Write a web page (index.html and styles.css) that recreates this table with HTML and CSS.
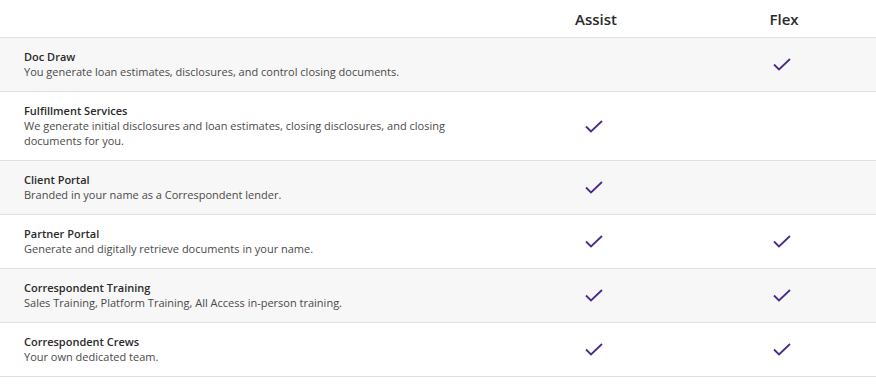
FILE: index.html
```html
<!DOCTYPE html>
<html lang="en">
<head>
  <meta charset="UTF-8">
  <meta name="viewport" content="width=device-width, initial-scale=1">
  <title>Compare Plans</title>
  <link rel="stylesheet" href="styles.css">
</head>
<body>
  <div class="compare">
    <div class="row head">
      <div class="feature"></div>
      <div class="plan">Assist</div>
      <div class="plan">Flex</div>
    </div>

    <div class="row shaded">
      <div class="feature">
        <h3>Doc Draw</h3>
        <p>You generate loan estimates, disclosures, and control closing documents.</p>
      </div>
      <div class="cell"></div>
      <div class="cell"><span class="check"></span></div>
    </div>

    <div class="row">
      <div class="feature">
        <h3>Fulfillment Services</h3>
        <p>We generate initial disclosures and loan estimates, closing disclosures, and closing documents for you.</p>
      </div>
      <div class="cell"><span class="check"></span></div>
      <div class="cell"></div>
    </div>

    <div class="row shaded">
      <div class="feature">
        <h3>Client Portal</h3>
        <p>Branded in your name as a Correspondent lender.</p>
      </div>
      <div class="cell"><span class="check"></span></div>
      <div class="cell"></div>
    </div>

    <div class="row">
      <div class="feature">
        <h3>Partner Portal</h3>
        <p>Generate and digitally retrieve documents in your name.</p>
      </div>
      <div class="cell"><span class="check"></span></div>
      <div class="cell"><span class="check"></span></div>
    </div>

    <div class="row shaded">
      <div class="feature">
        <h3>Correspondent Training</h3>
        <p>Sales Training, Platform Training, All Access in-person training.</p>
      </div>
      <div class="cell"><span class="check"></span></div>
      <div class="cell"><span class="check"></span></div>
    </div>

    <div class="row">
      <div class="feature">
        <h3>Correspondent Crews</h3>
        <p>Your own dedicated team.</p>
      </div>
      <div class="cell"><span class="check"></span></div>
      <div class="cell"><span class="check"></span></div>
    </div>
  </div>

  <script>
    // draw the check icon into every .check
    document.querySelectorAll('.check').forEach(el => {
      el.innerHTML = '<svg width="18" height="13" viewBox="0 0 18 13"><path d="M1 6.5 L6 11.5 L17 1" fill="none" stroke="#4a2a8c" stroke-width="1.8"/></svg>';
    });
  </script>
</body>
</html>
```

FILE: styles.css
```css
body {
  font-family: 'Open Sans', sans-serif;
  background: #fff;
  color: #333;
  margin: 0;
  padding: 0;
}

.compare {
  width: 876px;
}

.row {
  display: grid;
  grid-template-columns: 1fr 190px 186px;
  border-bottom: 1px solid #e0e0e0;
}

.row.shaded {
  background: #f7f7f7;
}

.row.head {
  height: 37px;
  align-items: center;
}

.plan {
  text-align: center;
  font-size: 15px;
  font-weight: 600;
  color: #2a2a2a;
  padding-left: 2px;
}

.feature {
  padding: 11px 24px 12px;
  max-width: 440px;
}

.feature h3 {
  margin: 0;
  font-size: 11px;
  line-height: 15px;
  font-weight: 600;
  color: #2a2a2a;
}

.feature p {
  margin: 0;
  font-size: 11px;
  line-height: 15px;
  color: #4a4a4a;
}

.cell {
  display: flex;
  align-items: center;
  justify-content: center;
  padding-right: 2px;
}

.check svg {
  display: block;
}
```
